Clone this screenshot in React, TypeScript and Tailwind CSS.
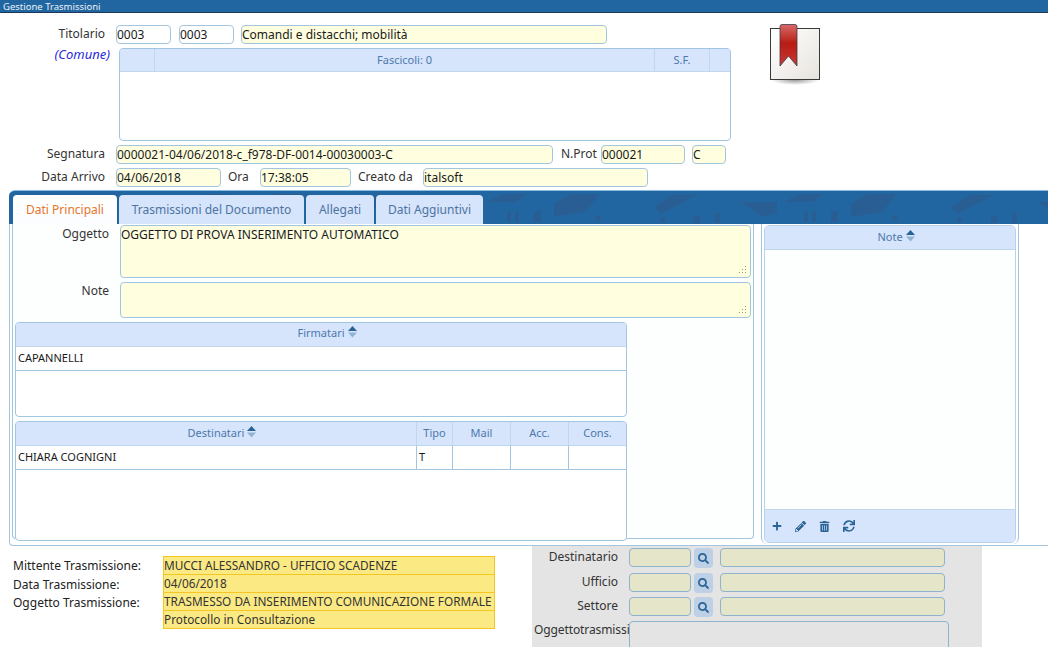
import React from "react";
import { FaPlus, FaPencilAlt, FaTrashAlt, FaSync, FaSearch } from "react-icons/fa";

const inputBase = "h-[19px] shrink-0 rounded-[4px] border border-[#a3c6e0] bg-[#ffffe0] text-[12px] leading-[17px] text-[#1a1a1a] overflow-hidden whitespace-nowrap";

function Field({ w, ml, value, white }: { w: string; ml?: string; value: string; white?: boolean }) {
  return <div className={`${inputBase} ${w} ${ml ?? ""} ${white ? "bg-white" : ""}`}>{value}</div>;
}

function Sort() {
  return (
    <svg width="9" height="12" viewBox="0 0 9 12" className="ml-[3px] -mr-[12px] inline-block align-[-1px]">
      <path d="M4.5 0 L9 5 H0 Z" fill="#2a6496" />
      <path d="M4.5 11.5 L9 6.5 H0 Z" fill="#93b3d3" />
    </svg>
  );
}

function Grip() {
  return (
    <svg width="8" height="8" viewBox="0 0 8 8" className="absolute right-[3px] bottom-[3px]">
      <g fill="#9a9a8a">
        <rect x="6" y="0" width="1" height="1" />
        <rect x="3" y="3" width="1" height="1" />
        <rect x="6" y="3" width="1" height="1" />
        <rect x="0" y="6" width="1" height="1" />
        <rect x="3" y="6" width="1" height="1" />
        <rect x="6" y="6" width="1" height="1" />
      </g>
    </svg>
  );
}

function Bookmark() {
  return (
    <svg width="52" height="64" viewBox="0 0 52 64" className="block">
      <defs>
        <linearGradient id="pg" x1="0" y1="0" x2="1" y2="1">
          <stop offset="0" stopColor="#ffffff" />
          <stop offset="0.5" stopColor="#f4f2ef" />
          <stop offset="1" stopColor="#e6e3de" />
        </linearGradient>
        <linearGradient id="rb" x1="0" y1="0" x2="0" y2="1">
          <stop offset="0" stopColor="#d9686a" />
          <stop offset="0.3" stopColor="#c0392f" />
          <stop offset="0.45" stopColor="#b81b12" />
          <stop offset="1" stopColor="#c83a36" />
        </linearGradient>
        <radialGradient id="sh" cx="0.5" cy="0.5" r="0.5">
          <stop offset="0" stopColor="#9a9a9a" />
          <stop offset="1" stopColor="#ffffff" />
        </radialGradient>
      </defs>
      <ellipse cx="25" cy="56" rx="24" ry="5" fill="url(#sh)" />
      <rect x="0.5" y="4.5" width="49" height="51" fill="url(#pg)" stroke="#3a3a3a" strokeWidth="1" />
      <path d="M10 2.5 Q10 0.5 12 0.5 H25 Q27 0.5 27 2.5 V42 L18.5 32 L10 42 Z" fill="url(#rb)" stroke="#3a3a4a" strokeWidth="0.8" />
    </svg>
  );
}

function Pattern() {
  return (
    <svg className="absolute inset-0 h-full w-full" preserveAspectRatio="none">
      <defs>
        <pattern id="tx" x="471" y="0" width="297" height="34" patternUnits="userSpaceOnUse">
          <g fill="#295e94">
            <path d="M7 11 L22 3 H47 L36 11 Z" />
            <path d="M74 13 L90 3 H120 L112 13 L105 21 L74 26 Z" />
            <path d="M174 16 L192 4 H217 L181 23 Z" />
            <path d="M261 11 H297 V22 L282 26 Z" />
            <rect x="27" y="20" width="4" height="11" />
            <rect x="35" y="20" width="4" height="11" />
            <rect x="54" y="20" width="7" height="11" />
            <circle cx="118" cy="27" r="3" />
            <rect x="180" y="27" width="5" height="5" />
            <rect x="214" y="25" width="6" height="7" />
            <rect x="235" y="22" width="5" height="10" />
          </g>
        </pattern>
      </defs>
      <rect width="100%" height="100%" fill="url(#tx)" />
    </svg>
  );
}

function Tab({ w, label, active }: { w: string; label: string; active?: boolean }) {
  return (
    <div
      className={`${w} h-[29px] shrink-0 rounded-t-[4px] text-center text-[12px] leading-[29px] ${
        active ? "bg-gradient-to-b from-white to-[#fbfdff] text-[#e8742a]" : "bg-[#d6e4fc] text-[#4d74a1]"
      }`}
    >
      {label}
    </div>
  );
}

const headCell = "h-full shrink-0 border-r border-[#c0d6ea] text-center text-[11px] leading-[21px] text-[#4d79ab]";
const bodyCell = "h-full shrink-0 border-r border-[#a3c6e0] pl-[2px] text-[11px] leading-[22px] text-[#1a1a1a]";

function Lookup({ label, mt }: { label: string; mt: string }) {
  return (
    <div className={`flex ${mt}`}>
      <div className="w-[86px] shrink-0 text-right text-[12px] leading-[17px] text-[#333]">{label}</div>
      <div className="ml-[11px] h-[19px] w-[62px] shrink-0 rounded-[4px] border border-[#8fb3cc] bg-[#e5e5c9]" />
      <div className="ml-[3px] flex h-[20px] w-[19px] shrink-0 items-center justify-center rounded-[4px] bg-[#bdd0e6]">
        <FaSearch className="text-[#2a6496]" size={11} />
      </div>
      <div className="ml-[7px] h-[19px] w-[225px] shrink-0 rounded-[4px] border border-[#8fb3cc] bg-[#e5e5c9]" />
    </div>
  );
}

const yellowRows = [
  ["Mittente Trasmissione:", "MUCCI ALESSANDRO - UFFICIO SCADENZE"],
  ["Data Trasmissione:", "04/06/2018"],
  ["Oggetto Trasmissione:", "TRASMESSO DA INSERIMENTO COMUNICAZIONE FORMALE"],
  ["", "Protocollo in Consultazione"],
];

export default function App() {
  return (
    <div className="h-[648px] w-[1048px] overflow-hidden bg-white font-['Open_Sans',sans-serif] text-[12px] text-[#333]">
      <div className="h-[13px] border-b border-[#1c3a57] bg-[#2166a0] pl-[3px] text-[9.5px] leading-[13px] text-[#eaf2f9]">
        Gestione Trasmissioni
      </div>

      <div className="flex pt-[12px]">
        <div className="w-[770px] shrink-0">
          <div className="flex">
            <div className="ml-[11px] w-[94px] shrink-0 text-right leading-[18px]">Titolario</div>
            <Field w="w-[55px]" ml="ml-[11px]" value="0003" white />
            <Field w="w-[55px]" ml="ml-[8px]" value="0003" white />
            <Field w="w-[366px]" ml="ml-[7px]" value="Comandi e distacchi; mobilità" />
          </div>
          <div className="mt-[4px] flex">
            <div className="w-[110px] shrink-0 text-right text-[13px] italic leading-[13px] text-[#2a2ae0]">(Comune)</div>
            <div className="ml-[9px] h-[93px] w-[612px] shrink-0 overflow-hidden rounded-[4px] border border-[#a3c6e0] bg-white">
              <div className="flex h-[23px] border-b border-[#c0d6ea] bg-[#d6e4fc]">
                <div className={`${headCell} w-[35px]`} />
                <div className={`${headCell} w-[500px]`}>Fascicoli: 0</div>
                <div className={`${headCell} w-[55px]`}>S.F.</div>
              </div>
            </div>
          </div>
          <div className="mt-[4px] flex">
            <div className="w-[105px] shrink-0 text-right leading-[18px]">Segnatura</div>
            <Field w="w-[437px]" ml="ml-[11px]" value="0000021-04/06/2018-c_f978-DF-0014-00030003-C" />
            <div className="ml-[8px] w-[35px] shrink-0 leading-[18px]">N.Prot</div>
            <Field w="w-[84px]" ml="ml-[5px]" value="000021" />
            <Field w="w-[34px]" ml="ml-[7px]" value="C" />
          </div>
          <div className="mt-[4px] flex">
            <div className="w-[105px] shrink-0 text-right leading-[18px]">Data Arrivo</div>
            <Field w="w-[105px]" ml="ml-[11px]" value="04/06/2018" />
            <div className="ml-[7px] w-[21px] shrink-0 leading-[18px]">Ora</div>
            <Field w="w-[91px]" ml="ml-[11px]" value="17:38:05" />
            <div className="ml-[7px] w-[55px] shrink-0 leading-[18px]">Creato da</div>
            <Field w="w-[225px]" ml="ml-[10px]" value="italsoft" />
          </div>
        </div>
        <div className="mt-[-1px]">
          <Bookmark />
        </div>
      </div>

      <div className="ml-[9px] mt-[3px] h-[356px]">
        <div className="relative h-[34px] overflow-hidden rounded-tl-[6px] border-t border-[#8cbde2] bg-[#2166a0]">
          <Pattern />
          <div className="relative flex items-end gap-[2px] pl-[4px] pt-[4px]">
            <Tab w="w-[104px]" label="Dati Principali" active />
            <Tab w="w-[185px]" label="Trasmissioni del Documento" />
            <Tab w="w-[68px]" label="Allegati" />
            <Tab w="w-[107px]" label="Dati Aggiuntivi" />
          </div>
        </div>
        <div className="flex h-[322px] rounded-bl-[4px] border-b border-l border-[#a3c6e0]">
          <div className="ml-[2px] h-[315px] w-[742px] shrink-0 rounded-b-[4px] border-x border-b border-[#a3c6e0] bg-[#fdfefe]">
            <div className="mt-px flex">
              <div className="w-[96px] shrink-0 text-right leading-[18px]">Oggetto</div>
              <div className="relative ml-[11px] h-[53px] w-[631px] shrink-0 rounded-[4px] border border-[#a3c6e0] bg-[#ffffe0] text-[12px] leading-[18px] text-[#1a1a1a]">
                OGGETTO DI PROVA INSERIMENTO AUTOMATICO
                <Grip />
              </div>
            </div>
            <div className="mt-[4px] flex">
              <div className="w-[96px] shrink-0 text-right leading-[18px]">Note</div>
              <div className="relative ml-[11px] h-[36px] w-[631px] shrink-0 rounded-[4px] border border-[#a3c6e0] bg-[#ffffe0]">
                <Grip />
              </div>
            </div>
            <div className="ml-[2px] mt-[4px] h-[95px] w-[612px] overflow-hidden rounded-[4px] border border-[#a3c6e0] bg-white">
              <div className="h-[24px] border-b border-[#c0d6ea] bg-[#d6e4fc] text-center text-[11px] leading-[20px] text-[#4d79ab]">
                Firmatari
                <Sort />
              </div>
              <div className="h-[24px] border-b border-[#a3c6e0] pl-[2px] text-[11px] leading-[21px] text-[#1a1a1a]">CAPANNELLI</div>
            </div>
            <div className="ml-[2px] mt-[4px] h-[120px] w-[612px] overflow-hidden rounded-[4px] border border-[#a3c6e0] bg-white">
              <div className="flex h-[24px] border-b border-[#c0d6ea] bg-[#d6e4fc]">
                <div className={`${headCell} w-[401px]`}>
                  Destinatari
                  <Sort />
                </div>
                <div className={`${headCell} w-[36px]`}>Tipo</div>
                <div className={`${headCell} w-[58px]`}>Mail</div>
                <div className={`${headCell} w-[58px]`}>Acc.</div>
                <div className={`${headCell} w-[57px] border-r-0`}>Cons.</div>
              </div>
              <div className="flex h-[24px] border-b border-[#a3c6e0]">
                <div className={`${bodyCell} w-[401px]`}>CHIARA COGNIGNI</div>
                <div className={`${bodyCell} w-[36px]`}>T</div>
                <div className={`${bodyCell} w-[58px]`} />
                <div className={`${bodyCell} w-[58px]`} />
                <div className={`${bodyCell} w-[58px]`} />
              </div>
            </div>
          </div>

          <div className="ml-[7px] h-[320px] w-[258px] shrink-0 rounded-b-[6px] border-x border-[#a3c6e0] pl-[2px] pt-px">
            <div className="flex h-[318px] w-[252px] flex-col overflow-hidden rounded-[5px] border border-[#b9d2ea] bg-[#fdfefe]">
              <div className="h-[24px] shrink-0 border-b border-[#c0d6ea] bg-[#d6e4fc] text-center text-[11px] leading-[22px] text-[#4d79ab]">
                Note
                <Sort />
              </div>
              <div className="flex-1" />
              <div className="flex h-[33px] shrink-0 items-center gap-[13px] border-t border-[#c0d6ea] bg-[#d6e4fc] pl-[7px] text-[#2a6496]">
                <FaPlus size={10} />
                <FaPencilAlt size={11} />
                <FaTrashAlt size={11} />
                <FaSync size={12} />
              </div>
            </div>
          </div>
        </div>
      </div>

      <div className="flex">
        <div className="w-[532px] shrink-0 pl-[13px] pt-[10px]">
          {yellowRows.map(([l, v], i) => (
            <div className="flex" key={i}>
              <div className="h-[18px] w-[150px] shrink-0 text-[12px] leading-[20px] text-[#222]">{l}</div>
              <div
                className={`h-[18px] w-[332px] shrink-0 overflow-hidden whitespace-nowrap border-x border-b border-[#f3c623] bg-[#fbe983] text-[11.8px] leading-[17px] text-[#333] ${
                  i === 0 ? "h-[19px] border-t" : ""
                }`}
              >
                {v}
              </div>
            </div>
          ))}
        </div>
        <div className="h-[101px] w-[450px] shrink-0 overflow-hidden bg-[#e4e4e4] pt-[2px]">
          <Lookup label="Destinatario" mt="" />
          <Lookup label="Ufficio" mt="mt-[5px]" />
          <Lookup label="Settore" mt="mt-[4px]" />
          <div className="mt-[4px] flex">
            <div className="ml-[2px] w-[95px] shrink-0 whitespace-nowrap text-[12px] leading-[18px] tracking-[-0.1px] text-[#333]">Oggettotrasmissi</div>
            <div className="h-[40px] w-[320px] shrink-0 rounded-[4px] border border-[#8fb3cc]" />
          </div>
        </div>
      </div>
    </div>
  );
}
